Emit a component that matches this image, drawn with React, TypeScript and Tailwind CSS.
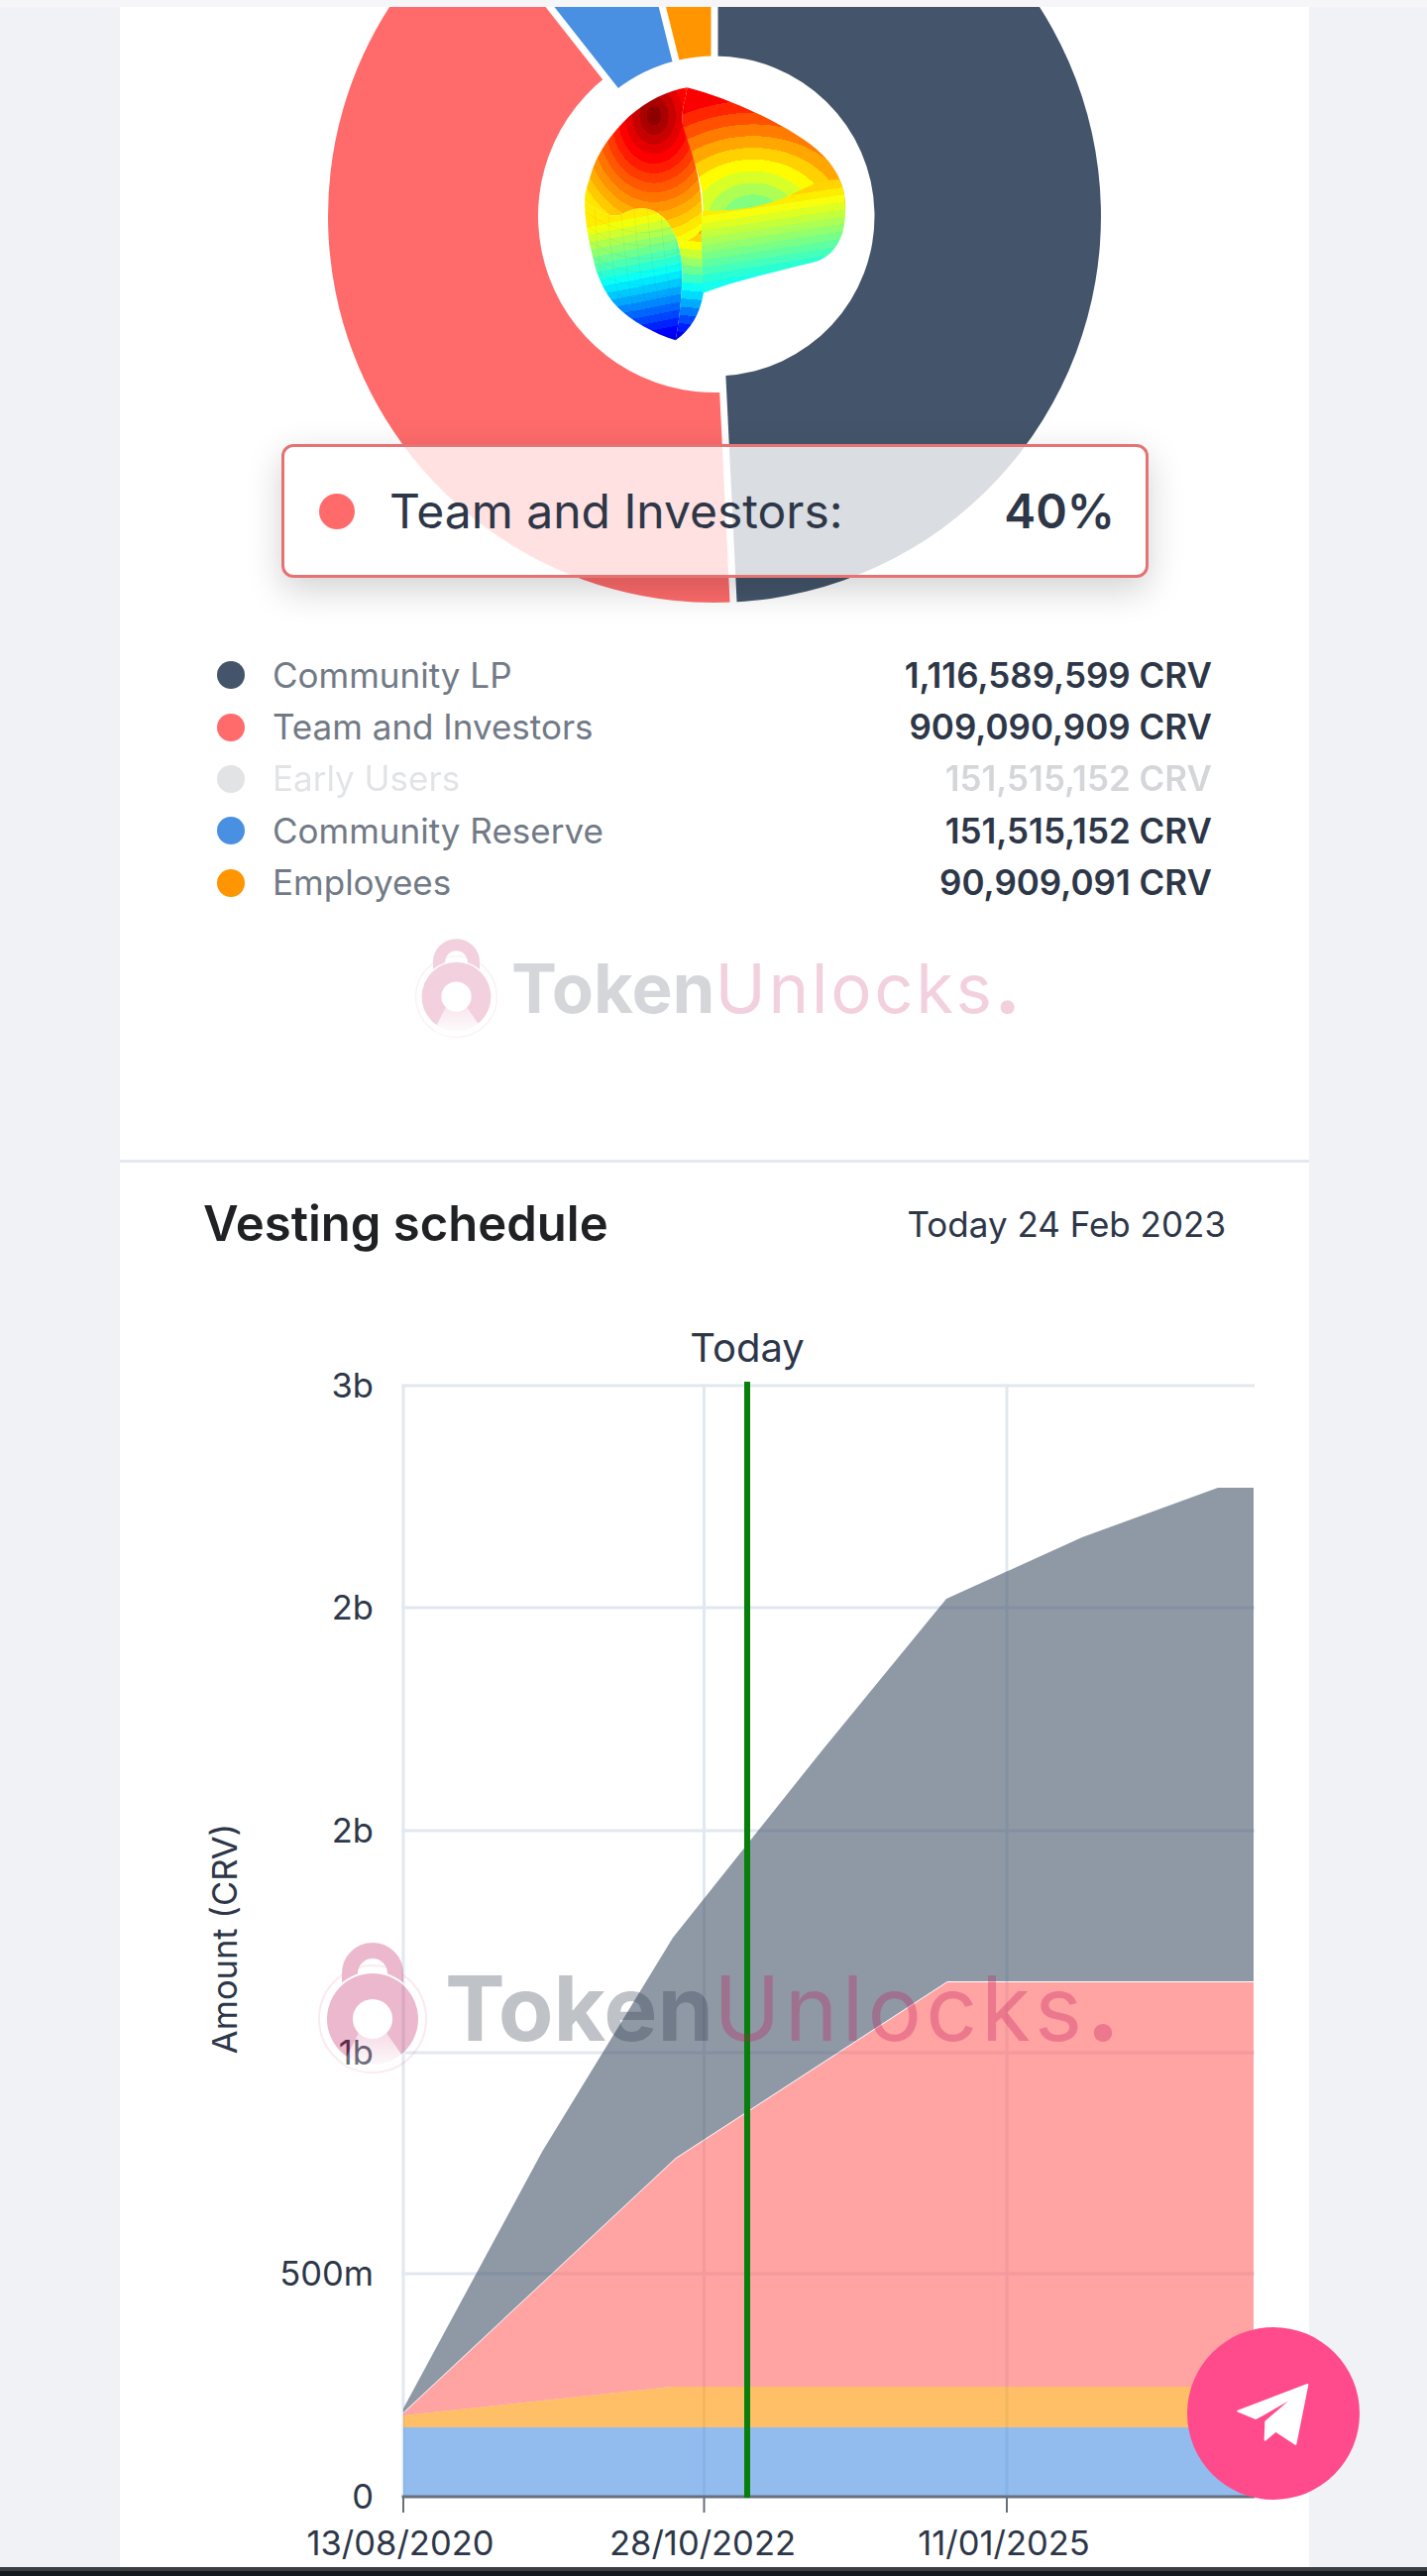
import React from 'react';

const CX = 721;
const CY = 218;

const slices = [
  { color: '#44556b', from: 0, to: 177.2, inner: 161.5 },
  { color: '#ff6b6b', from: 177.2, to: 321.8, inner: 178 },
  { color: '#4a90e2', from: 321.8, to: 346, inner: 161.5 },
  { color: '#ff9500', from: 346, to: 360, inner: 161.5 },
];

const legend = [
  { name: 'Community LP', value: '1,116,589,599 CRV', color: 'bg-[#44556b]', faded: false },
  { name: 'Team and Investors', value: '909,090,909 CRV', color: 'bg-[#ff6b6b]', faded: false },
  { name: 'Early Users', value: '151,515,152 CRV', color: 'bg-[#6f7378]', faded: true },
  { name: 'Community Reserve', value: '151,515,152 CRV', color: 'bg-[#4a90e2]', faded: false },
  { name: 'Employees', value: '90,909,091 CRV', color: 'bg-[#ff9500]', faded: false },
];

function polar(r: number, deg: number) {
  const a = (deg * Math.PI) / 180;
  return `${CX + r * Math.sin(a)} ${CY - r * Math.cos(a)}`;
}

function sector(from: number, to: number, inner: number, outer: number) {
  const large = to - from > 180 ? 1 : 0;
  return `M${polar(outer, from)} A${outer} ${outer} 0 ${large} 1 ${polar(outer, to)} L${polar(inner, to)} A${inner} ${inner} 0 ${large} 0 ${polar(inner, from)} Z`;
}

function jet(t: number) {
  const c = (v: number) => Math.round(255 * Math.min(1, Math.max(0, v)));
  return `rgb(${c(1.5 - Math.abs(4 * t - 3))},${c(1.5 - Math.abs(4 * t - 2))},${c(1.5 - Math.abs(4 * t - 1))})`;
}

// hard stepped stops, the logo surface is drawn in flat coloured strips
function bands(from: number, to: number, n: number) {
  const stops: React.ReactNode[] = [];
  for (let i = 0; i < n; i++) {
    const t = from + ((to - from) * (i + 0.5)) / n;
    stops.push(<stop key={`${i}a`} offset={i / n} stopColor={jet(t)} />);
    stops.push(<stop key={`${i}b`} offset={(i + 1) / n} stopColor={jet(t)} />);
  }
  return stops;
}

function CurveLogo() {
  const upper =
    'M400 85 C340 95 280 125 225 172 C170 225 125 285 105 360 C95 390 90 410 90 430 C130 460 160 480 200 470 C240 445 290 440 330 480 C350 505 365 530 375 560 C400 550 430 535 442 515 C450 470 445 400 425 320 C410 260 385 210 385 180 C385 140 400 110 400 85 Z';
  const lower =
    'M90 430 C130 460 160 480 200 470 C240 445 290 440 330 480 C360 510 385 570 385 640 C385 720 375 800 365 850 C300 830 230 790 190 750 C150 710 125 650 115 600 C100 540 90 480 90 430 Z';
  return (
    <g transform="translate(560 60) scale(0.3333)" filter="url(#soft)">
      <defs>
        <filter id="soft" x="-5%" y="-5%" width="110%" height="110%">
          <feGaussianBlur stdDeviation="2" />
        </filter>
        <radialGradient id="ring" gradientUnits="userSpaceOnUse" cx="0" cy="0" r="1" gradientTransform="translate(600 480) scale(500 390)">
          {bands(0.44, 0.9, 11)}
        </radialGradient>
        <linearGradient id="tube" gradientUnits="userSpaceOnUse" x1="675" y1="395" x2="715" y2="655">
          {bands(0.68, 0.38, 12)}
        </linearGradient>
        <radialGradient id="upper" gradientUnits="userSpaceOnUse" cx="0" cy="0" r="1" gradientTransform="translate(300 170) scale(480 640)">
          {bands(1.0, 0.38, 22)}
        </radialGradient>
        <linearGradient id="lower" gradientUnits="userSpaceOnUse" x1="250" y1="455" x2="330" y2="860">
          {bands(0.66, 0.08, 18)}
        </linearGradient>
        <linearGradient id="fold" gradientUnits="userSpaceOnUse" x1="420" y1="500" x2="390" y2="850">
          {bands(0.74, 0.08, 14)}
        </linearGradient>
        <clipPath id="lobe">
          <path d={lower} />
        </clipPath>
      </defs>
      <path
        d="M400 85 C520 115 700 195 790 270 C850 320 880 380 880 450 L860 500 L450 470 L445 400 C430 300 385 240 385 180 C385 140 400 110 400 85 Z"
        fill="url(#ring)"
      />
      <path
        d="M448 458 C560 462 660 440 745 395 C790 372 835 360 862 365 C880 400 885 470 872 520 C860 565 830 600 790 612 C680 640 560 665 446 708 L440 520 Z"
        fill="url(#tube)"
      />
      <path d={upper} fill="url(#upper)" />
      <path d={lower} fill="url(#lower)" />
      <path
        d="M375 560 C400 550 430 535 442 515 L450 705 C440 770 410 820 365 850 C375 800 385 720 385 640 C385 610 380 585 375 560 Z"
        fill="url(#fold)"
      />
      <g clipPath="url(#lobe)" fill="none" stroke="#000" strokeOpacity="0.07" strokeWidth="2">
        {[120, 160, 200, 240, 280, 320, 360].map((x) => (
          <path key={x} d={`M${x} 450 Q${x + 10} 650 ${x + 60} 860`} />
        ))}
        {[510, 550, 590, 630, 670, 710, 750].map((y) => (
          <path key={y} d={`M90 ${y - 50} Q240 ${y + 60} 400 ${y - 20}`} />
        ))}
      </g>
    </g>
  );
}

function Lock({ className }: { className: string }) {
  return (
    <svg viewBox="-60 -85 120 150" className={className}>
      <defs>
        <linearGradient id="wedge" x1="0" y1="0" x2="0" y2="1">
          <stop offset="0" stopColor="#fff" stopOpacity="0.5" />
          <stop offset="1" stopColor="#fff" />
        </linearGradient>
      </defs>
      <circle cx="0" cy="0" r="54" fill="none" stroke="#c2185b" strokeOpacity="0.3" strokeWidth="2" />
      <path d="M-23 -30 V-46 A23 23 0 0 1 23 -46 V-30" fill="none" stroke="#c2185b" strokeWidth="16" />
      <circle cx="0" cy="0" r="48" fill="#fff" />
      <circle cx="0" cy="0" r="46" fill="#c2185b" />
      <path d="M-14 14 L-30 45 A46 46 0 0 0 30 37 L14 14 Z" fill="url(#wedge)" />
      <circle cx="0" cy="0" r="20" fill="#fff" />
    </svg>
  );
}

function Area({ points, fill }: { points: number[][]; fill: string }) {
  return <polygon points={points.map((p) => p.join(',')).join(' ')} fill={fill} fillOpacity="0.6" />;
}

function VestingChart() {
  const rows = [
    { y: 1398, label: '3b' },
    { y: 1622, label: '2b' },
    { y: 1847, label: '2b' },
    { y: 2071, label: '1b' },
    { y: 2294, label: '500m' },
    { y: 2519, label: '0' },
  ];
  const cols = [
    { x: 407, label: '13/08/2020', at: 404 },
    { x: 710.5, label: '28/10/2022', at: 709 },
    { x: 1016, label: '11/01/2025', at: 1013 },
  ];
  return (
    <svg viewBox="121 1320 1200 1270" className="block w-[1200px] h-[1270px]">
      {rows.slice(0, 5).map((r) => (
        <line key={r.y} x1="405.5" x2="1266" y1={r.y} y2={r.y} stroke="#e2e8f0" strokeWidth="3" />
      ))}
      {cols.map((c) => (
        <line key={c.x} x1={c.x} x2={c.x} y1="1396.5" y2="2519" stroke="#e2e8f0" strokeWidth="3" />
      ))}
      <Area
        fill="#44556b"
        points={[[407, 2430], [547, 2171], [679, 1955], [828, 1768], [955, 1613], [1092, 1551], [1229, 1501], [1265, 1501], [1265, 1999], [956, 1999], [682, 2177], [407, 2434]]}
      />
      <Area fill="#ff6565" points={[[407, 2435], [682, 2178], [956, 2000], [1265, 2000], [1265, 2408], [678, 2408], [407, 2437]]} />
      <Area fill="#ff9500" points={[[407, 2437], [678, 2408], [1265, 2408], [1265, 2449], [407, 2449]]} />
      <Area fill="#4a90e2" points={[[407, 2449], [1265, 2449], [1265, 2519], [407, 2519]]} />
      <line x1="405.5" x2="1266" y1="2519" y2="2519" stroke="#666f7c" strokeWidth="3" />
      {cols.map((c) => (
        <line key={c.x} x1={c.x} x2={c.x} y1="2519" y2="2535" stroke="#666f7c" strokeWidth="2" />
      ))}
      <line x1="754" x2="754" y1="1394" y2="2520" stroke="#087f0a" strokeWidth="6" />
      <g fill="#2d3748" className="text-[34.5px]">
        <text x="754" y="1374" textAnchor="middle" className="text-[40px]">
          Today
        </text>
        {rows.map((r) => (
          <text key={r.y} x="377" y={r.y + 12} textAnchor="end">
            {r.label}
          </text>
        ))}
        {cols.map((c) => (
          <text key={c.x} x={c.at} y="2578" textAnchor="middle">
            {c.label}
          </text>
        ))}
        <text transform="translate(239 1956) rotate(-90)" textAnchor="middle">
          Amount (CRV)
        </text>
      </g>
    </svg>
  );
}

export default function App() {
  return (
    <div className="relative w-[1440px] h-[2599px] overflow-hidden flex flex-col bg-[#f1f2f6] font-[Inter,sans-serif] text-[#2d3748]">
      <div className="h-[7px] bg-[#f6f6f9] shrink-0" />

      <main className="ml-[121px] w-[1200px] h-[2583px] bg-white shrink-0 overflow-hidden">
        <section className="relative h-[1163px]">
          <svg viewBox="121 7 1200 648" className="block w-[1200px] h-[648px]">
            {slices.map((s) => (
              <path key={s.color} d={sector(s.from, s.to, s.inner, 390)} fill={s.color} />
            ))}
            {[0, 177.2, 321.8, 346].map((a) => (
              <line
                key={a}
                x1={polar(150, a).split(' ')[0]}
                y1={polar(150, a).split(' ')[1]}
                x2={polar(396, a).split(' ')[0]}
                y2={polar(396, a).split(' ')[1]}
                stroke="#fff"
                strokeWidth="7"
              />
            ))}
            <CurveLogo />
          </svg>

          <div className="absolute left-[163px] top-[441px] w-[875px] h-[135px] flex items-center justify-between pl-[35px] pr-[31px] rounded-[12px] border-[3px] border-[#e57373] bg-white/80 shadow-[0_12px_36px_rgba(0,0,0,0.18)]">
            <div className="flex items-center gap-[35px]">
              <span className="w-[36px] h-[36px] rounded-full bg-[#ff6b6b]" />
              <span className="text-[48px] leading-none">Team and Investors:</span>
            </div>
            <span className="text-[48px] leading-none font-semibold">40%</span>
          </div>

          <ul className="pl-[98px] pr-[98px]">
            {legend.map((row) => (
              <li key={row.name} className={`h-[52.4px] flex items-center justify-between ${row.faded ? 'opacity-20' : ''}`}>
                <div className="flex items-center gap-[28px]">
                  <span className={`w-[28px] h-[28px] rounded-full ${row.color}`} />
                  <span className="text-[35px] leading-none text-[#717a86]">{row.name}</span>
                </div>
                <span className="text-[35px] leading-none font-semibold">{row.value}</span>
              </li>
            ))}
          </ul>

          <div className="ml-[294px] mt-[24px] flex items-start gap-[10px] opacity-20">
            <Lock className="w-[91px] h-[114px]" />
            <div className="mt-[22px] text-[69px] leading-none">
              <span className="font-bold text-[#2d3748]">Token</span>
              <span className="font-normal tracking-[2.6px] text-[#c2185b]">Unlocks</span>
              <span className="font-black text-[#c2185b]">.</span>
            </div>
          </div>
        </section>

        <div className="h-[3px] bg-[#e2e8f0]" />

        <header className="h-[147px] pt-[30px] pl-[84px] pr-[84px] flex items-start justify-between">
          <h2 className="text-[49px] leading-[64px] font-semibold text-[#1f2124]">Vesting schedule</h2>
          <span className="text-[35px] leading-[64px]">Today 24 Feb 2023</span>
        </header>

        <div className="relative">
          <VestingChart />
          <div className="absolute left-[195px] top-[632px] flex items-start gap-[13px] opacity-30">
            <Lock className="w-[120px] h-[150px]" />
            <div className="mt-[29px] text-[91px] leading-none">
              <span className="font-bold text-[#2d3748]">Token</span>
              <span className="font-normal tracking-[4px] text-[#c2185b]">Unlocks</span>
              <span className="font-black text-[#c2185b]">.</span>
            </div>
          </div>
        </div>
      </main>

      <div className="flex-1 border-t-[4px] border-[#3a3f44] bg-[#15191d]" />

      <button className="absolute left-[1198px] top-[2348px] w-[174px] h-[174px] rounded-full bg-[#ff4a8c] flex items-center justify-center">
        <svg viewBox="0 0 330 270" className="w-[110px] h-[90px]">
          <path
            d="M268 48 L58 128 L112 150 L235 80 L142 160 L140 215 L172 188 L232 228 Z"
            fill="#fff"
            stroke="#fff"
            strokeWidth="6"
            strokeLinejoin="round"
          />
        </svg>
      </button>
    </div>
  );
}
